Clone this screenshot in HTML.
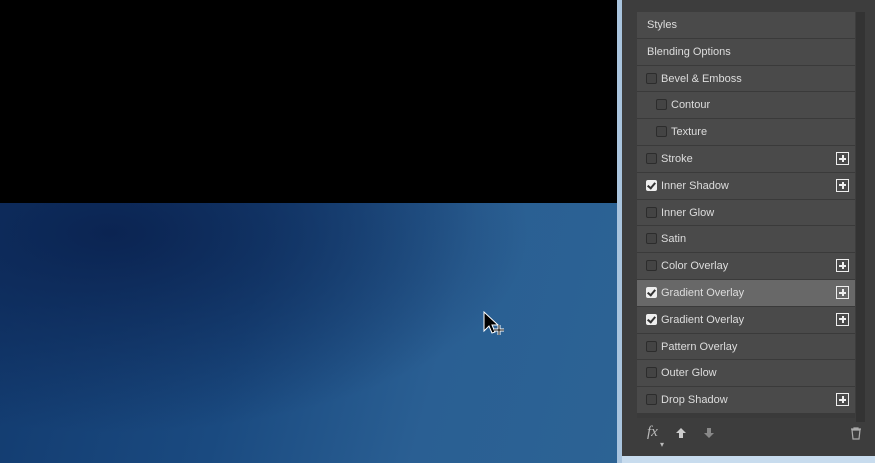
<!DOCTYPE html>
<html><head><style>
body{margin:0;width:875px;height:463px;overflow:hidden;position:relative;background:#000;font-family:"Liberation Sans",sans-serif}
#blue{position:absolute;left:0;top:203px;width:618px;height:260px;
background:radial-gradient(ellipse 420px 200px at 110px 30px,#0b2452 0%,rgba(20,60,110,0) 100%),linear-gradient(105deg,#123a6e 0%,#1a4a80 40%,#2a5f93 70%,#2c6394 100%)}
#sep{position:absolute;left:617px;top:0;width:5px;height:463px;background:#a9c4de}
#panel{position:absolute;left:622px;top:0;width:253px;height:456px;background:#3d3d3d}
#bot{position:absolute;left:622px;top:456px;width:253px;height:7px;background:#c8dcee}
#list{position:absolute;left:637px;top:12px;width:218px;height:406px;background:#3a3a3a}
#sb{position:absolute;left:856px;top:12px;width:9px;height:410px;background:#333}
.r{position:absolute;left:0;width:218px;height:25.8px;background:#4a4a4a;color:#ddd;font-size:11px;line-height:26px;box-sizing:border-box}
.r.h{background:#686868}
.cb{position:absolute;top:7px;width:9px;height:9px;border:1px solid #2c2c2c;background:#444;border-radius:2px}
.cb.on{background:#eee;border-color:#eee}
.cb.on:after{content:"";position:absolute;left:2px;top:0;width:3px;height:6px;border:solid #333;border-width:0 2px 2px 0;transform:rotate(40deg)}
.p{position:absolute;left:199px;top:6px;width:13px;height:13px;border:1px solid #eee;box-sizing:border-box}
.p:before{content:"";position:absolute;left:2px;top:4.5px;width:7px;height:2px;background:#eee}
.p:after{content:"";position:absolute;left:4.5px;top:2px;width:2px;height:7px;background:#eee}
.ft{position:absolute;color:#bbb}
</style></head><body>
<div id="blue"></div><div id="sep"></div><div id="panel"></div><div id="bot"></div>
<div id="sb"></div>
<div id="list">
<div class="r" style="top:0;padding-left:10px">Styles</div>
<div class="r" style="top:26.8px;padding-left:10px">Blending Options</div>
<div class="r" style="top:53.6px;padding-left:24px"><span class="cb" style="left:9px"></span>Bevel &amp; Emboss</div>
<div class="r" style="top:80.4px;padding-left:34px"><span class="cb" style="left:19px"></span>Contour</div>
<div class="r" style="top:107.2px;padding-left:34px"><span class="cb" style="left:19px"></span>Texture</div>
<div class="r" style="top:134px;padding-left:24px"><span class="cb" style="left:9px"></span>Stroke<span class="p"></span></div>
<div class="r" style="top:160.8px;padding-left:24px"><span class="cb on" style="left:9px"></span>Inner Shadow<span class="p"></span></div>
<div class="r" style="top:187.6px;padding-left:24px"><span class="cb" style="left:9px"></span>Inner Glow</div>
<div class="r" style="top:214.4px;padding-left:24px"><span class="cb" style="left:9px"></span>Satin</div>
<div class="r" style="top:241.2px;padding-left:24px"><span class="cb" style="left:9px"></span>Color Overlay<span class="p"></span></div>
<div class="r h" style="top:268px;padding-left:24px"><span class="cb on" style="left:9px"></span>Gradient Overlay<span class="p"></span></div>
<div class="r" style="top:294.8px;padding-left:24px"><span class="cb on" style="left:9px"></span>Gradient Overlay<span class="p"></span></div>
<div class="r" style="top:321.6px;padding-left:24px"><span class="cb" style="left:9px"></span>Pattern Overlay</div>
<div class="r" style="top:348.4px;padding-left:24px"><span class="cb" style="left:9px"></span>Outer Glow</div>
<div class="r" style="top:375.2px;padding-left:24px"><span class="cb" style="left:9px"></span>Drop Shadow<span class="p"></span></div>
</div>
<div class="ft" style="left:647px;top:424px;font-size:15px;font-style:italic;font-family:'Liberation Serif',serif">fx</div>
<div class="ft" style="left:660px;top:440px;font-size:8px">▾</div>
<svg style="position:absolute;left:675px;top:427px" width="12" height="12"><path d="M6 1L11 6H8V11H4V6H1Z" fill="#ccc"/></svg>
<svg style="position:absolute;left:703px;top:427px" width="12" height="12"><path d="M6 11L11 6H8V1H4V6H1Z" fill="#888"/></svg>
<svg style="position:absolute;left:850px;top:427px" width="12" height="13"><path d="M1 2H11M4 2V1H8V2M2 3H10L9 12H3Z" fill="none" stroke="#aaa" stroke-width="1.2"/></svg>
<svg style="position:absolute;left:482px;top:311px" width="26" height="26"><path d="M2 1V20L7 15L10 22L13 21L10 14H16Z" fill="#000" stroke="#fff" stroke-width="1"/><path d="M17 14V24M12 19H22" stroke="#fff" stroke-width="3"/><path d="M17 14V24M12 19H22" stroke="#000" stroke-width="1"/></svg>
</body></html>
